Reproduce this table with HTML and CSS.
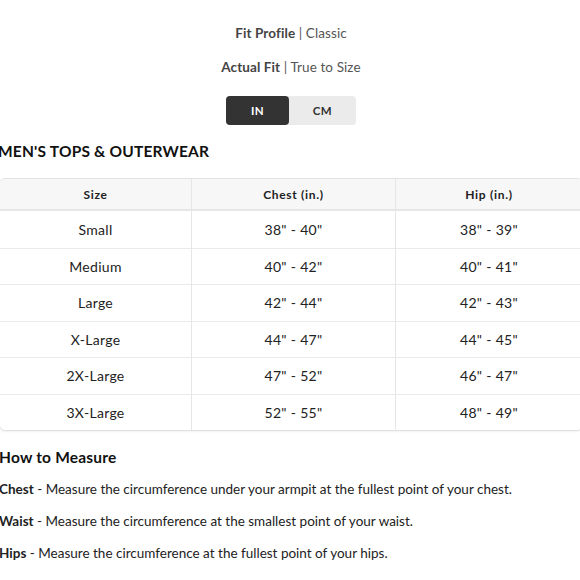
FILE: index.html
```html
<!DOCTYPE html>
<html>
<head>
<meta charset="utf-8">
<link rel="stylesheet" href="styles.css">
</head>
<body>
<div class="page">
  <div class="fit">
    <p class="fit-line"><b>Fit Profile</b> | Classic</p>
    <p class="fit-line"><b>Actual Fit</b> | True to Size</p>
    <div class="toggle">
      <span class="seg active">IN</span>
      <span class="seg">CM</span>
    </div>
  </div>
  <h2 class="title">MEN'S TOPS &amp; OUTERWEAR</h2>
  <div class="table-wrap">
    <table class="sizes">
      <thead>
        <tr><th class="c1">Size</th><th class="c2">Chest (in.)</th><th class="c3">Hip (in.)</th></tr>
      </thead>
      <tbody>
        <tr><td>Small</td><td>38" - 40"</td><td>38" - 39"</td></tr>
        <tr><td>Medium</td><td>40" - 42"</td><td>40" - 41"</td></tr>
        <tr><td>Large</td><td>42" - 44"</td><td>42" - 43"</td></tr>
        <tr><td>X-Large</td><td>44" - 47"</td><td>44" - 45"</td></tr>
        <tr><td>2X-Large</td><td>47" - 52"</td><td>46" - 47"</td></tr>
        <tr><td>3X-Large</td><td>52" - 55"</td><td>48" - 49"</td></tr>
      </tbody>
    </table>
  </div>
  <h3 class="measure">How to Measure</h3>
  <p class="tip"><b>Chest</b> - Measure the circumference under your armpit at the fullest point of your chest.</p>
  <p class="tip"><b>Waist</b> - Measure the circumference at the smallest point of your waist.</p>
  <p class="tip"><b>Hips</b> - Measure the circumference at the fullest point of your hips.</p>
</div>
</body>
</html>
```
FILE: styles.css
```css
html, body {
  margin: 0;
  padding: 0;
  background: #fff;
  overflow: hidden;
}
body {
  font-family: "Lato", "Liberation Sans", sans-serif;
  color: #222;
}
.page {
  width: 584px;
  margin-left: -1px;
  padding-top: 25px;
}
.fit {
  display: flex;
  flex-direction: column;
  align-items: center;
}
.fit-line {
  margin: 0 0 17px 0;
  font-size: 13.5px;
  line-height: 17px;
  color: #555;
  letter-spacing: 0.1px;
}
.fit-line b {
  color: #444;
  font-weight: 700;
}
.toggle {
  display: flex;
  width: 130px;
  height: 29px;
  background: #ebebeb;
  border-radius: 4px;
  margin-top: 3px;
}
.seg {
  display: flex;
  align-items: center;
  justify-content: center;
  font-size: 11.5px;
  font-weight: 700;
  color: #333;
  width: 67px;
  letter-spacing: 0.4px;
}
.seg.active {
  width: 63px;
  background: #333;
  color: #fff;
  border-radius: 4px;
}
.title {
  margin: 16px 0 0 -1px;
  font-size: 15.5px;
  line-height: 20px;
  font-weight: 700;
  color: #111;
  letter-spacing: 0.2px;
}
.table-wrap {
  margin-top: 17px;
  border: 1px solid #e2e2e2;
  border-radius: 6px;
  overflow: hidden;
  box-shadow: 0 1px 2px rgba(0,0,0,0.06);
}
.sizes {
  width: 100%;
  border-collapse: collapse;
  table-layout: fixed;
}
.sizes th {
  background: #f7f7f7;
  font-size: 12px;
  font-weight: 700;
  color: #222;
  height: 30px;
  padding: 0;
  letter-spacing: 0.7px;
  border-bottom: 2px solid #e6e6e6;
}
.c1 { width: 191px; }
.c2 { width: 203px; }
.sizes td {
  font-size: 14px;
  color: #222;
  height: 35.5px;
  padding: 0;
  text-align: center;
  border-top: 1px solid #ebebeb;
  letter-spacing: 0.3px;
}
.sizes tbody tr:first-child td { border-top: none; height: 36.5px; }
.sizes th + th, .sizes td + td {
  border-left: 1px solid #e6e6e6;
}
.measure {
  margin: 16px 0 0 0;
  font-size: 15.5px;
  line-height: 20px;
  font-weight: 700;
  color: #111;
  letter-spacing: 0.2px;
}
.tip {
  margin: 12px 0 0 0;
  font-size: 13.5px;
  line-height: 20px;
  color: #222;
}
```
